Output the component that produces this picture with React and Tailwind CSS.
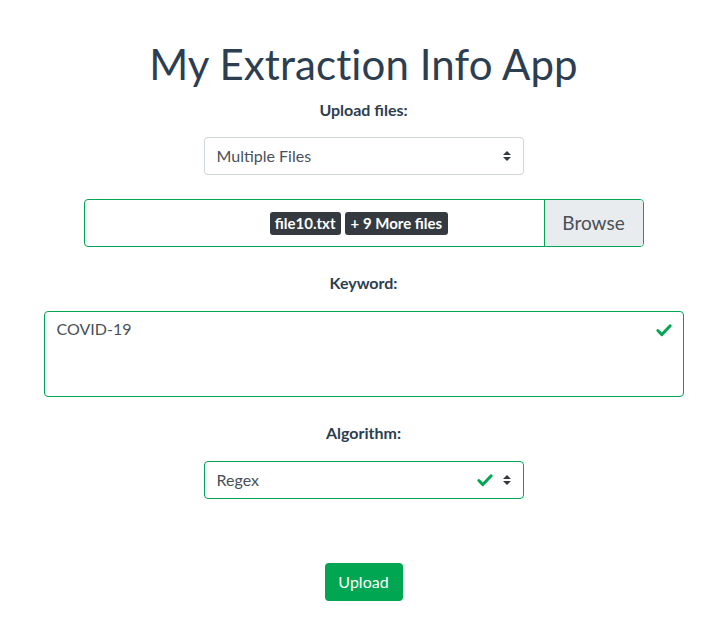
const Check = ({ className }) => (
  <svg className={className} viewBox="0 0 16 16" fill="none">
    <path d="M2.5 8.5l3.6 3.6L13.5 4.2" stroke="currentColor" strokeWidth="2.6" strokeLinecap="round" strokeLinejoin="round" />
  </svg>
);

const Caret = () => (
  <svg className="h-[10px] w-[8px] text-[#343a40]" viewBox="0 0 8 10" fill="currentColor">
    <path d="M4 0L8 4H0z" />
    <path d="M4 10L0 6h8z" />
  </svg>
);

export default function App() {
  return (
    <div className="min-h-[642px] bg-white font-['Lato',sans-serif] text-[#2c3e50] flex flex-col items-center pt-[39px]">
      <h1 className="text-[42px] leading-[50px] font-normal tracking-[0.1px]">My Extraction Info App</h1>

      <label className="mt-[10px] text-[16px] leading-[22px] font-bold">Upload files:</label>
      <div className="mt-[16px] w-[320px] h-[38px] border border-[#ced4da] rounded-[4px] flex items-center justify-between pl-[12px] pr-[12px] text-[16px] text-[#495057]">
        <span>Multiple Files</span>
        <Caret />
      </div>

      <div className="mt-[24px] w-[560px] h-[48px] border border-[#00a651] rounded-[4px] flex overflow-hidden">
        <div className="flex-1 flex items-center justify-center gap-[4px] pl-[90px]">
          <span className="bg-[#343a40] text-white font-bold text-[15px] leading-[19px] px-[5px] py-[2px] rounded-[3px]">file10.txt</span>
          <span className="bg-[#343a40] text-white font-bold text-[15px] leading-[19px] px-[6px] py-[2px] rounded-[3px]">+ 9 More files</span>
        </div>
        <div className="w-[99px] bg-[#e9ecef] border-l border-[#00a651] flex items-center justify-center text-[19px] text-[#495057]">Browse</div>
      </div>

      <label className="mt-[25px] text-[16px] leading-[22px] font-bold">Keyword:</label>
      <div className="mt-[17px] w-[640px] h-[86px] border border-[#00a651] rounded-[4px] flex justify-between pl-[12px] pr-[10px] pt-[5px]">
        <span className="text-[16px] leading-[24px] text-[#495057]">COVID-19</span>
        <Check className="h-[18px] w-[18px] mt-[4px] text-[#00a651]" />
      </div>

      <label className="mt-[25px] text-[16px] leading-[22px] font-bold">Algorithm:</label>
      <div className="mt-[17px] w-[320px] h-[38px] border border-[#00a651] rounded-[4px] flex items-center pl-[12px] pr-[12px] text-[16px] text-[#495057]">
        <span className="flex-1">Regex</span>
        <Check className="h-[18px] w-[18px] mr-[9px] text-[#00a651]" />
        <Caret />
      </div>

      <button className="mt-[64px] w-[78px] h-[38px] bg-[#00a651] text-white text-[16px] rounded-[4px]">Upload</button>
    </div>
  );
}
